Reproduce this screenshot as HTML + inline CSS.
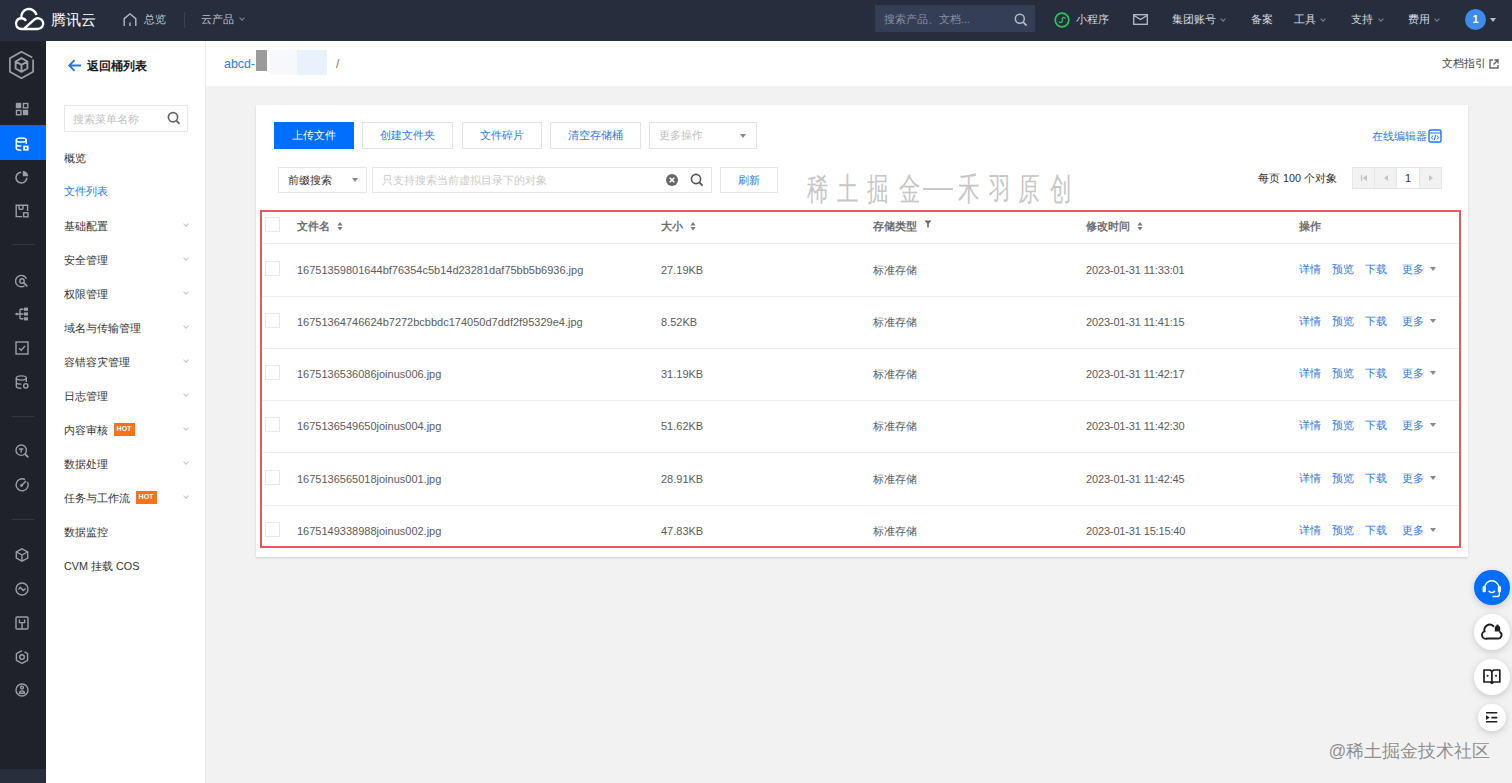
<!DOCTYPE html>
<html><head><meta charset="utf-8">
<style>
*{margin:0;padding:0;box-sizing:border-box}
html,body{width:1512px;height:783px;overflow:hidden;background:#f2f2f2;font-family:"Liberation Sans",sans-serif;font-size:11px;color:#333;font-weight:500}
.a{position:absolute}
#top{left:0;top:0;width:1512px;height:41px;background:#262d3c}
#side{left:0;top:41px;width:46px;height:742px;background:#1f222b}
#menu{left:46px;top:41px;width:160px;height:742px;background:#fff;border-right:1px solid #ececec}
#hdr{left:206px;top:41px;width:1306px;height:45px;background:#fff}
#card{left:256px;top:105px;width:1212px;height:452px;background:#fff;box-shadow:0 1px 2px rgba(0,0,0,.14)}
.t{white-space:nowrap;line-height:14px}
.tw{color:#d6d9e0}
.tg{color:#bcc1cb}
.mi{position:absolute;left:64px;font-size:10.8px;color:#333;white-space:nowrap;line-height:14px}
.chev{position:absolute;left:184px;width:4px;height:4px;border-right:1px solid #c4c4c4;border-bottom:1px solid #c4c4c4;transform:rotate(45deg)}
.tchev{position:absolute;top:17px;width:4px;height:4px;border-right:1px solid #7e8596;border-bottom:1px solid #7e8596;transform:rotate(45deg)}
.hot{display:inline-block;background:#f97316;color:#fff;font-size:7px;font-weight:bold;line-height:12px;height:12.5px;width:21px;text-align:center;margin-left:5.5px;vertical-align:top;margin-top:0.5px}
.btn{position:absolute;top:122px;height:27px;border:1px solid #e3e3e3;background:#fff;color:#2f7be6;text-align:center;line-height:25px;font-size:11px}
.row{position:absolute;left:262px;width:1198px;height:1px;background:#efefef}
.cb{position:absolute;left:265px;width:15px;height:15px;border:1px solid #e8e8e8;background:#fff}
.c1,.c2,.c3,.c4,.c5{position:absolute;white-space:nowrap;font-size:11px;color:#5c5c5c;line-height:14px}
.c1{left:297px}.c2{left:661px}.c3{left:873px}.c4{left:1086px;letter-spacing:-0.15px}
.op{position:absolute;white-space:nowrap;font-size:10.8px;color:#2f7be6;line-height:14px}
.car{position:absolute;width:0;height:0;border-left:3.5px solid transparent;border-right:3.5px solid transparent;border-top:4px solid #888}
.fab{position:absolute;border-radius:50%;background:#fff;box-shadow:0 2px 7px rgba(0,0,0,.17)}
.wm{position:absolute;top:169.4px;font-family:'Liberation Serif',serif;font-size:32px;line-height:40px;color:#c6c6c6;transform:scaleX(0.67);transform-origin:0 0;white-space:nowrap}
.sic{position:absolute;left:13px}
.sep{position:absolute;left:12px;width:22px;height:1px;background:#343844}
</style></head><body>
<!-- top bar -->
<div id="top" class="a"></div>
<svg class="a" style="left:8px;top:4px" width="44" height="32" viewBox="8 4 44 32"><path d="M26 20.8 A5.4 5.4 0 1 0 21.2 29 H37.8 A5.4 5.4 0 1 0 34.2 19.6 L24.2 28.6 M21.5 18.3 A7.6 7.6 0 0 1 36.4 15" fill="none" stroke="#fff" stroke-width="2.4" stroke-linejoin="round"/></svg>
<div class="a t" style="left:51px;top:13px;font-size:14.8px;font-weight:500;color:#fff">腾讯云</div>
<svg class="a" style="left:122px;top:12px" width="16" height="15" viewBox="0 0 16 15"><path d="M2.2 14 V6.6 L8 1.8 L13.8 6.6 V14 M8 14 V10.5" fill="none" stroke="#b4bac6" stroke-width="1.4"/></svg>
<div class="a t tg" style="left:144px;top:12px">总览</div>
<div class="a" style="left:184px;top:12px;width:1px;height:16px;background:#3a4153"></div>
<div class="a t tg" style="left:201px;top:12px">云产品</div>
<div class="tchev" style="left:240px;top:16px"></div>

<div class="a" style="left:875px;top:5px;width:160px;height:27px;background:#343e54"></div>
<div class="a t" style="left:884px;top:12px;color:#8991a3">搜索产品、文档...</div>
<svg class="a" style="left:1014px;top:13px" width="14" height="14" viewBox="0 0 14 14"><circle cx="5.8" cy="5.8" r="4.5" fill="none" stroke="#b4bac6" stroke-width="1.5"/><path d="M9.2 9.2 L12.6 12.6" stroke="#b4bac6" stroke-width="1.7"/></svg>
<svg class="a" style="left:1054px;top:12px" width="16" height="16" viewBox="0 0 16 16"><circle cx="8" cy="8" r="6.8" fill="none" stroke="#2bc45a" stroke-width="1.7"/><path d="M5.2 9.2 a1.5 1.5 0 1 0 3 0 V6.8 a1.5 1.5 0 1 1 3 0" fill="none" stroke="#2bc45a" stroke-width="1.3"/></svg>
<div class="a t tw" style="left:1076px;top:12px">小程序</div>
<svg class="a" style="left:1133px;top:14px" width="15" height="11" viewBox="0 0 15 11"><rect x="0.7" y="0.7" width="13.6" height="9.6" fill="none" stroke="#b9bfcb" stroke-width="1.3"/><path d="M1 1.5 L7.5 5.6 L14 1.5" fill="none" stroke="#b9bfcb" stroke-width="1.3"/></svg>
<div class="a t tw" style="left:1172px;top:12px">集团账号</div>
<div class="tchev" style="left:1221px"></div>
<div class="a t tw" style="left:1251px;top:12px">备案</div>
<div class="a t tw" style="left:1294px;top:12px">工具</div>
<div class="tchev" style="left:1321px"></div>
<div class="a t tw" style="left:1351px;top:12px">支持</div>
<div class="tchev" style="left:1379px"></div>
<div class="a t tw" style="left:1408px;top:12px">费用</div>
<div class="tchev" style="left:1435px"></div>
<div class="a" style="left:1465px;top:9px;width:21px;height:21px;border-radius:50%;background:#3d8bea;color:#fff;font-size:11px;font-weight:bold;text-align:center;line-height:21px">1</div>
<div class="car" style="left:1490px;top:18px;border-top-color:#b9bfcb"></div>

<!-- side icon bar -->
<div id="side" class="a"></div>
<div class="a" style="left:0;top:125px;width:46px;height:35px;background:#006eff"></div>
<div class="a" style="left:0;top:769px;width:46px;height:14px;background:#272e3c"></div>
<svg class="a" style="left:8px;top:50px" width="27" height="30" viewBox="0 0 27 30"><path d="M24.3 7.6 L13.5 1.8 L1.9 8.3 V21.8 L13.5 28.3 L25.1 21.8 V9.6" fill="none" stroke="#9a9ea7" stroke-width="1.7" stroke-linejoin="round"/><path d="M13.5 8.2 L19.4 11.5 V18.5 L13.5 21.8 L7.6 18.5 V11.5 Z M7.6 11.5 L13.5 14.8 L19.4 11.5 M13.5 14.8 V21.8" fill="none" stroke="#9a9ea7" stroke-width="1.9" stroke-linejoin="round"/></svg>
<svg class="a" style="left:14.5px;top:102.0px" width="14" height="14" viewBox="0 0 14 14"><rect x="0.8" y="0.8" width="5.4" height="5.4" fill="#9a9ea7"/><rect x="8.4" y="1.5" width="4.4" height="4.4" fill="none" stroke="#9a9ea7" stroke-width="1.4"/><rect x="1.5" y="8.4" width="4.4" height="4.4" fill="none" stroke="#9a9ea7" stroke-width="1.4"/><rect x="7.8" y="7.8" width="5.4" height="5.4" fill="#9a9ea7"/></svg>
<svg class="a" style="left:14.5px;top:136.5px" width="14" height="14" viewBox="0 0 14 14"><ellipse cx="6.3" cy="3" rx="5" ry="2.1" fill="none" stroke="#fff" stroke-width="1.5"/><path d="M1.3 3 V11.3 C1.3 12.5 3.5 13.2 6.3 13.2 M11.3 3 V7 M1.3 7.2 C1.3 8.4 3.5 9.1 6.3 9.1" fill="none" stroke="#fff" stroke-width="1.5"/><rect x="8.2" y="8.6" width="5.4" height="5" fill="#fff"/><rect x="10" y="10.4" width="1.8" height="1.6" fill="#006eff"/></svg>
<svg class="a" style="left:14.5px;top:170.0px" width="14" height="14" viewBox="0 0 14 14"><path d="M6.2 2.2 A5.4 5.4 0 1 0 11.8 7.8" fill="none" stroke="#9a9ea7" stroke-width="1.6"/><path d="M7.8 0.8 A5.6 5.6 0 0 1 13.3 6.3 H7.8 Z" fill="#9a9ea7"/></svg>
<svg class="a" style="left:14.5px;top:203.5px" width="14" height="14" viewBox="0 0 14 14"><path d="M7 12.6 H1.2 V1.2 H12.6 V7 M4 1.2 V4 C4 6 8 6 8 4 V1.2" fill="none" stroke="#9a9ea7" stroke-width="1.4"/><rect x="8.6" y="8.8" width="4.4" height="4" fill="none" stroke="#9a9ea7" stroke-width="1.4"/></svg>
<div class="sep" style="top:244px"></div>
<svg class="a" style="left:14.5px;top:274.0px" width="14" height="14" viewBox="0 0 14 14"><path d="M11.5 4.8 A5.7 5.7 0 1 0 9.5 11.8" fill="none" stroke="#9a9ea7" stroke-width="1.4" stroke-width="1.5"/><circle cx="7" cy="7" r="2.2" fill="none" stroke="#9a9ea7" stroke-width="1.4"/><path d="M8.6 8.6 L12.3 12.3" stroke="#9a9ea7" stroke-width="1.7"/></svg>
<svg class="a" style="left:14.5px;top:306.5px" width="14" height="14" viewBox="0 0 14 14"><circle cx="1.6" cy="7" r="1.3" fill="#9a9ea7"/><path d="M2 7 H5 M5 2.2 V11.8 M5 2.2 H8.5 M5 7 H8.5 M5 11.8 H8.5" fill="none" stroke="#9a9ea7" stroke-width="1.4" stroke-width="1.3"/><rect x="9" y="0.6" width="4" height="3.2" fill="#9a9ea7"/><rect x="9" y="5.4" width="4" height="3.2" fill="#9a9ea7"/><rect x="9" y="10.2" width="4" height="3.2" fill="#9a9ea7"/></svg>
<svg class="a" style="left:14.5px;top:340.7px" width="14" height="14" viewBox="0 0 14 14"><rect x="1" y="1" width="12" height="12" fill="none" stroke="#9a9ea7" stroke-width="1.4"/><path d="M4 7.2 L6.2 9.2 L10 5" fill="none" stroke="#9a9ea7" stroke-width="1.4"/></svg>
<svg class="a" style="left:14.5px;top:374.5px" width="14" height="14" viewBox="0 0 14 14"><ellipse cx="6.3" cy="3" rx="5" ry="2.1" fill="none" stroke="#9a9ea7" stroke-width="1.4"/><path d="M1.3 3 V11.3 C1.3 12.5 3.5 13.2 6.3 13.2 M11.3 3 V7 M1.3 7.2 C1.3 8.4 3.5 9.1 6.3 9.1" fill="none" stroke="#9a9ea7" stroke-width="1.4"/><circle cx="10.8" cy="10.8" r="2.2" fill="none" stroke="#9a9ea7" stroke-width="1.4"/></svg>
<div class="sep" style="top:415.5px"></div>
<svg class="a" style="left:14.5px;top:443.5px" width="14" height="14" viewBox="0 0 14 14"><circle cx="6.2" cy="6.2" r="5.2" fill="none" stroke="#9a9ea7" stroke-width="1.4" stroke-width="1.6"/><path d="M10 10 L13.3 13.3" stroke="#9a9ea7" stroke-width="1.8"/><path d="M4 5 H8.4 M6.2 5 V8.5" stroke="#9a9ea7" stroke-width="1.4"/></svg>
<svg class="a" style="left:14.5px;top:478.0px" width="14" height="14" viewBox="0 0 14 14"><path d="M10 1.6 A6 6 0 1 0 12.4 4" fill="none" stroke="#9a9ea7" stroke-width="1.4" stroke-width="1.6"/><path d="M6 8 L11 3" stroke="#9a9ea7" stroke-width="1.6"/><circle cx="6.5" cy="7.5" r="1.4" fill="#9a9ea7"/></svg>
<div class="sep" style="top:519px"></div>
<svg class="a" style="left:14.5px;top:547.6px" width="14" height="14" viewBox="0 0 14 14"><path d="M7 0.8 L12.7 4 V10 L7 13.2 L1.3 10 V4 Z" fill="none" stroke="#9a9ea7" stroke-width="1.4"/><path d="M7 7 V13 M7 7 L1.6 4 M7 7 L12.4 4" fill="none" stroke="#9a9ea7" stroke-width="1.4" stroke-width="1.2"/></svg>
<svg class="a" style="left:14.5px;top:582.0px" width="14" height="14" viewBox="0 0 14 14"><circle cx="7" cy="7" r="6" fill="none" stroke="#9a9ea7" stroke-width="1.4" stroke-width="1.5"/><path d="M3.4 7.6 L5.3 5.4 L8.3 8.6 L10.6 6.4" fill="none" stroke="#9a9ea7" stroke-width="1.4" stroke-width="1.3"/></svg>
<svg class="a" style="left:14.5px;top:615.8px" width="14" height="14" viewBox="0 0 14 14"><rect x="1" y="1" width="12" height="12" rx="1" fill="none" stroke="#9a9ea7" stroke-width="1.4"/><path d="M4.4 3.6 V6.6 H9.6 V3.6 M7 6.6 V13" fill="none" stroke="#9a9ea7" stroke-width="1.4" stroke-width="1.3"/></svg>
<svg class="a" style="left:14.5px;top:649.5px" width="14" height="14" viewBox="0 0 14 14"><path d="M9.5 1.8 L12.6 3.7 V10.3 L7 13.4 L1.4 10.3 V3.7 L7 0.6" fill="none" stroke="#9a9ea7" stroke-width="1.4"/><circle cx="7" cy="7" r="2.3" fill="none" stroke="#9a9ea7" stroke-width="1.4" stroke-width="1.3"/></svg>
<svg class="a" style="left:14.5px;top:683.0px" width="14" height="14" viewBox="0 0 14 14"><circle cx="7" cy="7" r="6" fill="none" stroke="#9a9ea7" stroke-width="1.4" stroke-width="1.5"/><circle cx="7" cy="4.6" r="1.4" fill="none" stroke="#9a9ea7" stroke-width="1.4" stroke-width="1.1"/><path d="M4.5 10.3 C4.5 7 9.5 7 9.5 10.3 Z" fill="none" stroke="#9a9ea7" stroke-width="1.4" stroke-width="1.1"/></svg>

<!-- menu -->
<div id="menu" class="a"></div>
<svg class="a" style="left:67px;top:59px" width="15" height="14" viewBox="0 0 15 14"><path d="M14 6.5 H2.5 M7.5 1.2 L2.2 6.5 L7.5 11.8" fill="none" stroke="#1a76f0" stroke-width="1.8"/></svg>
<div class="a t" style="left:87px;top:59px;font-size:12.4px;font-weight:bold;color:#1b1b1b">返回桶列表</div>
<div class="a" style="left:64px;top:105px;width:124px;height:27px;border:1px solid #e8e8e8;background:#fff"></div>
<div class="a t" style="left:73px;top:112px;color:#c2c2c2;font-size:10.8px">搜索菜单名称</div>
<svg class="a" style="left:167px;top:111px" width="15" height="15" viewBox="0 0 15 15"><circle cx="6" cy="6.2" r="4.6" fill="none" stroke="#666" stroke-width="1.7"/><path d="M9.4 9.6 L12.6 12.8" stroke="#666" stroke-width="1.9"/></svg>
<div class="mi" style="top:150.5px">概览</div>
<div class="mi" style="top:184.0px;color:#2f7be6">文件列表</div>
<div class="mi" style="top:218.5px">基础配置</div>
<div class="chev" style="top:221.5px"></div>
<div class="mi" style="top:252.5px">安全管理</div>
<div class="chev" style="top:255.5px"></div>
<div class="mi" style="top:286.5px">权限管理</div>
<div class="chev" style="top:289.5px"></div>
<div class="mi" style="top:320.5px">域名与传输管理</div>
<div class="chev" style="top:323.5px"></div>
<div class="mi" style="top:354.5px">容错容灾管理</div>
<div class="chev" style="top:357.5px"></div>
<div class="mi" style="top:388.5px">日志管理</div>
<div class="chev" style="top:391.5px"></div>
<div class="mi" style="top:422.5px">内容审核<span class="hot">HOT</span></div>
<div class="chev" style="top:425.5px"></div>
<div class="mi" style="top:456.5px">数据处理</div>
<div class="chev" style="top:459.5px"></div>
<div class="mi" style="top:490.5px">任务与工作流<span class="hot">HOT</span></div>
<div class="chev" style="top:493.5px"></div>
<div class="mi" style="top:524.5px">数据监控</div>
<div class="mi" style="top:558.5px">CVM 挂载 COS</div>

<!-- header -->
<div id="hdr" class="a"></div>
<div class="a t" style="left:224px;top:57px;font-size:12.4px;color:#2a7bf2">abcd-</div>
<div class="a" style="left:256px;top:50px;width:11px;height:21px;background:#9b9b9b"></div>
<div class="a" style="left:270px;top:50px;width:27px;height:25px;background:#f6f8fc"></div>
<div class="a" style="left:297px;top:50px;width:30px;height:25px;background:#e9f1fc"></div>
<div class="a t" style="left:336px;top:57px;font-size:12px;color:#777">/</div>
<div class="a t" style="left:1442px;top:56px;font-size:10.8px;color:#444">文档指引</div>
<svg class="a" style="left:1489px;top:59px" width="10" height="10" viewBox="0 0 10 10"><path d="M4 1 H1 V9 H9 V6 M5.5 1 H9 V4.5 M9 1 L4.5 5.5" fill="none" stroke="#666" stroke-width="1.4"/></svg>

<!-- card -->
<div id="card" class="a"></div>
<div class="btn" style="left:274px;width:80px;background:#006eff;border-color:#006eff;color:#fff">上传文件</div>
<div class="btn" style="left:362px;width:91px">创建文件夹</div>
<div class="btn" style="left:462px;width:80px">文件碎片</div>
<div class="btn" style="left:550px;width:91px">清空存储桶</div>
<div class="btn" style="left:649px;width:108px;color:#c0c0c0;text-align:left;padding-left:9px">更多操作</div>
<div class="car" style="left:740px;top:134px"></div>
<div class="a t" style="left:1372px;top:129px;color:#2f7be6;font-size:10.8px">在线编辑器</div>
<svg class="a" style="left:1428px;top:129px" width="14" height="14" viewBox="0 0 14 14"><rect x="1" y="1" width="12" height="12" rx="1.5" fill="none" stroke="#1a76f0" stroke-width="1.4"/><path d="M1 4 H13 M5 6.5 L3.5 8.5 L5 10.5 M9 6.5 L10.5 8.5 L9 10.5 M7.6 6 L6.4 11" fill="none" stroke="#1a76f0" stroke-width="1"/></svg>

<div class="a" style="left:278px;top:167px;width:89px;height:26px;border:1px solid #e6e6e6;background:#fff"></div>
<div class="a t" style="left:288px;top:173px;color:#333;font-size:10.8px">前缀搜索</div>
<div class="car" style="left:352px;top:178px"></div>
<div class="a" style="left:372px;top:167px;width:340px;height:26px;border:1px solid #e6e6e6;background:#fff"></div>
<div class="a t" style="left:382px;top:173px;color:#cacaca;font-size:10.6px">只支持搜索当前虚拟目录下的对象</div>
<svg class="a" style="left:665px;top:173px" width="14" height="14" viewBox="0 0 14 14"><circle cx="7" cy="7" r="6" fill="#666"/><path d="M4.7 4.7 L9.3 9.3 M9.3 4.7 L4.7 9.3" stroke="#fff" stroke-width="1.5"/></svg>
<svg class="a" style="left:690px;top:173px" width="14" height="15" viewBox="0 0 14 15"><circle cx="6" cy="6" r="4.6" fill="none" stroke="#555" stroke-width="1.6"/><path d="M9.4 9.4 L12.6 12.6" stroke="#555" stroke-width="1.7"/></svg>
<div class="a" style="left:720px;top:167px;width:58px;height:26px;border:1px solid #e6e6e6;background:#fff;color:#2f7be6;text-align:center;line-height:24px;font-size:10.8px">刷新</div>

<div class="wm" style="left:806.5px">稀</div><div class="wm" style="left:837px">土</div><div class="wm" style="left:867px">掘</div><div class="wm" style="left:898.6px">金</div><div class="wm" style="left:958px">禾</div><div class="wm" style="left:988.7px">羽</div><div class="wm" style="left:1018.4px">原</div><div class="wm" style="left:1050px">创</div><div class="a" style="left:922.5px;top:188px;width:30.5px;height:1.6px;background:#c9c9c9"></div>

<div class="a t" style="left:1258px;top:171px;color:#333;font-size:10.8px">每页 100 个对象</div>
<div class="a" style="left:1352px;top:167px;width:90px;height:22px;border:1px solid #e6e6e6;background:#f2f2f2"></div>
<div class="a" style="left:1374px;top:167px;width:1px;height:22px;background:#e6e6e6"></div>
<div class="a" style="left:1396px;top:167px;width:24px;height:22px;border:1px solid #e6e6e6;background:#fff;text-align:center;line-height:20px;font-size:11px;color:#333">1</div>
<svg class="a" style="left:1360px;top:174px" width="8" height="8" viewBox="0 0 8 8"><path d="M1.5 1 V7" stroke="#c4c4c4" stroke-width="1.2"/><path d="M7 1 V7 L2.5 4 Z" fill="#c4c4c4"/></svg>
<svg class="a" style="left:1382px;top:174px" width="8" height="8" viewBox="0 0 8 8"><path d="M6 1 V7 L2 4 Z" fill="#c4c4c4"/></svg>
<svg class="a" style="left:1427px;top:174px" width="8" height="8" viewBox="0 0 8 8"><path d="M2 1 V7 L6 4 Z" fill="#c4c4c4"/></svg>

<!-- table -->
<div class="cb" style="top:217px"></div>
<div class="c1" style="top:219px;color:#6e6e6e;font-weight:bold">文件名</div>
<div class="c2" style="top:219px;color:#6e6e6e;font-weight:bold">大小</div>
<div class="c3" style="top:219px;color:#6e6e6e;font-weight:bold">存储类型</div>
<div class="c4" style="top:219px;color:#6e6e6e;font-weight:bold">修改时间</div>
<div class="c5" style="left:1299px;top:219px;color:#6e6e6e;font-weight:bold">操作</div>
<svg class="a" style="left:336.5px;top:222px" width="6" height="8.5" viewBox="0 0 6 8.5"><path d="M3 0 L5.6 3.5 H0.4 Z M3 8.5 L5.6 5 H0.4 Z" fill="#7a7a7a"/></svg>
<svg class="a" style="left:690.0px;top:222px" width="6" height="8.5" viewBox="0 0 6 8.5"><path d="M3 0 L5.6 3.5 H0.4 Z M3 8.5 L5.6 5 H0.4 Z" fill="#7a7a7a"/></svg>
<svg class="a" style="left:1136.5px;top:222px" width="6" height="8.5" viewBox="0 0 6 8.5"><path d="M3 0 L5.6 3.5 H0.4 Z M3 8.5 L5.6 5 H0.4 Z" fill="#7a7a7a"/></svg>
<svg class="a" style="left:924px;top:220px" width="8" height="8" viewBox="0 0 8 8"><path d="M0.5 0.5 H7.5 L4.8 3.5 V7.5 H3.2 V3.5 Z" fill="#666"/></svg>
<div class="row" style="top:243px"></div>
<div class="cb" style="top:261px"></div>
<div class="c1" style="top:262.5px">16751359801644bf76354c5b14d23281daf75bb5b6936.jpg</div><div class="c2" style="top:262.5px">27.19KB</div><div class="c3" style="top:262.5px">标准存储</div><div class="c4" style="top:262.5px">2023-01-31 11:33:01</div>
<div class="op" style="left:1299px;top:262.0px">详情</div><div class="op" style="left:1332px;top:262.0px">预览</div><div class="op" style="left:1365px;top:262.0px">下载</div><div class="op" style="left:1402px;top:262.0px">更多</div><div class="car" style="left:1430px;top:266.5px;border-left-width:3.2px;border-right-width:3.2px;border-top-width:4.6px"></div>
<div class="cb" style="top:313px"></div>
<div class="c1" style="top:314.5px">16751364746624b7272bcbbdc174050d7ddf2f95329e4.jpg</div><div class="c2" style="top:314.5px">8.52KB</div><div class="c3" style="top:314.5px">标准存储</div><div class="c4" style="top:314.5px">2023-01-31 11:41:15</div>
<div class="op" style="left:1299px;top:314.0px">详情</div><div class="op" style="left:1332px;top:314.0px">预览</div><div class="op" style="left:1365px;top:314.0px">下载</div><div class="op" style="left:1402px;top:314.0px">更多</div><div class="car" style="left:1430px;top:318.5px;border-left-width:3.2px;border-right-width:3.2px;border-top-width:4.6px"></div>
<div class="cb" style="top:365px"></div>
<div class="c1" style="top:366.5px">1675136536086joinus006.jpg</div><div class="c2" style="top:366.5px">31.19KB</div><div class="c3" style="top:366.5px">标准存储</div><div class="c4" style="top:366.5px">2023-01-31 11:42:17</div>
<div class="op" style="left:1299px;top:366.0px">详情</div><div class="op" style="left:1332px;top:366.0px">预览</div><div class="op" style="left:1365px;top:366.0px">下载</div><div class="op" style="left:1402px;top:366.0px">更多</div><div class="car" style="left:1430px;top:370.5px;border-left-width:3.2px;border-right-width:3.2px;border-top-width:4.6px"></div>
<div class="cb" style="top:417px"></div>
<div class="c1" style="top:418.5px">1675136549650joinus004.jpg</div><div class="c2" style="top:418.5px">51.62KB</div><div class="c3" style="top:418.5px">标准存储</div><div class="c4" style="top:418.5px">2023-01-31 11:42:30</div>
<div class="op" style="left:1299px;top:418.0px">详情</div><div class="op" style="left:1332px;top:418.0px">预览</div><div class="op" style="left:1365px;top:418.0px">下载</div><div class="op" style="left:1402px;top:418.0px">更多</div><div class="car" style="left:1430px;top:422.5px;border-left-width:3.2px;border-right-width:3.2px;border-top-width:4.6px"></div>
<div class="cb" style="top:470px"></div>
<div class="c1" style="top:471.5px">1675136565018joinus001.jpg</div><div class="c2" style="top:471.5px">28.91KB</div><div class="c3" style="top:471.5px">标准存储</div><div class="c4" style="top:471.5px">2023-01-31 11:42:45</div>
<div class="op" style="left:1299px;top:471.0px">详情</div><div class="op" style="left:1332px;top:471.0px">预览</div><div class="op" style="left:1365px;top:471.0px">下载</div><div class="op" style="left:1402px;top:471.0px">更多</div><div class="car" style="left:1430px;top:475.5px;border-left-width:3.2px;border-right-width:3.2px;border-top-width:4.6px"></div>
<div class="cb" style="top:522px"></div>
<div class="c1" style="top:523.5px">1675149338988joinus002.jpg</div><div class="c2" style="top:523.5px">47.83KB</div><div class="c3" style="top:523.5px">标准存储</div><div class="c4" style="top:523.5px">2023-01-31 15:15:40</div>
<div class="op" style="left:1299px;top:523.0px">详情</div><div class="op" style="left:1332px;top:523.0px">预览</div><div class="op" style="left:1365px;top:523.0px">下载</div><div class="op" style="left:1402px;top:523.0px">更多</div><div class="car" style="left:1430px;top:527.5px;border-left-width:3.2px;border-right-width:3.2px;border-top-width:4.6px"></div>
<div class="row" style="top:296px"></div>
<div class="row" style="top:348px"></div>
<div class="row" style="top:400px"></div>
<div class="row" style="top:452px"></div>
<div class="row" style="top:505px"></div>

<div class="a" style="left:260px;top:210px;width:1201px;height:337.5px;border:2px solid #e5585e"></div>

<!-- FABs -->
<div class="fab" style="left:1474px;top:569.5px;width:35.6px;height:35.6px;background:#006eff"></div>
<svg class="a" style="left:1474px;top:569.5px" width="36" height="36" viewBox="1474 569.5 36 36"><path d="M1484.6 589 V587.5 A7.2 7.2 0 0 1 1499 587.5 V589" fill="none" stroke="#fff" stroke-width="1.5"/><rect x="1482.6" y="585.6" width="3.2" height="6.2" rx="1.2" fill="#fff"/><rect x="1497.8" y="585.6" width="3.2" height="6.2" rx="1.2" fill="#fff"/><path d="M1488.6 590.2 Q1491.8 594 1495 590.2" fill="none" stroke="#fff" stroke-width="1.5"/><path d="M1499.4 591.5 V594 Q1499.4 596 1497 596 H1492.5" fill="none" stroke="#fff" stroke-width="1.4"/></svg>
<div class="fab" style="left:1474px;top:614px;width:35.6px;height:35.6px"></div>
<svg class="a" style="left:1474px;top:614px" width="36" height="36" viewBox="1474 614 36 36"><path d="M1493.5 626.2 A5.4 5.4 0 0 0 1484.5 631.3 A3.8 3.8 0 0 0 1487.2 638.5 H1497.3 A3.6 3.6 0 0 0 1500 632" fill="none" stroke="#1e1e1e" stroke-width="1.9" stroke-linecap="round"/><path d="M1494.8 631.4 V628.3 A2.7 2.7 0 0 1 1500.2 628.3 V631.4 Z" fill="#1e1e1e"/><rect x="1496.5" y="624.6" width="2" height="1.4" fill="#1e1e1e"/></svg>
<div class="fab" style="left:1474px;top:659px;width:35.6px;height:35.6px"></div>
<svg class="a" style="left:1474px;top:659px" width="36" height="36" viewBox="1474 659 36 36"><path d="M1484 670 H1490 L1491.9 671.4 L1493.8 670 H1499.8 V682 H1493.5 L1491.9 683.4 L1490.3 682 H1484 Z M1491.9 671.4 V682.5" fill="none" stroke="#1e1e1e" stroke-width="1.7" stroke-linejoin="round"/><circle cx="1487.6" cy="675.7" r="1" fill="#1e1e1e"/><circle cx="1496" cy="675.7" r="1" fill="#1e1e1e"/></svg>
<div class="fab" style="left:1478.2px;top:703.7px;width:27.5px;height:27.5px"></div>
<svg class="a" style="left:1478px;top:703px" width="28" height="28" viewBox="1478 703 28 28"><path d="M1486 712.8 H1497.3 M1491.3 717.6 H1497.3 M1486 721.8 H1497.3" stroke="#1e1e1e" stroke-width="1.6"/><path d="M1486 715.2 L1489.8 717.6 L1486 720 Z" fill="#1e1e1e"/></svg>
<div class="a t" style="left:1328.5px;top:741px;font-size:17.5px;line-height:20px;color:#8e8e8e;text-shadow:0 0 1px #fff">@稀土掘金技术社区</div>
</body></html>
